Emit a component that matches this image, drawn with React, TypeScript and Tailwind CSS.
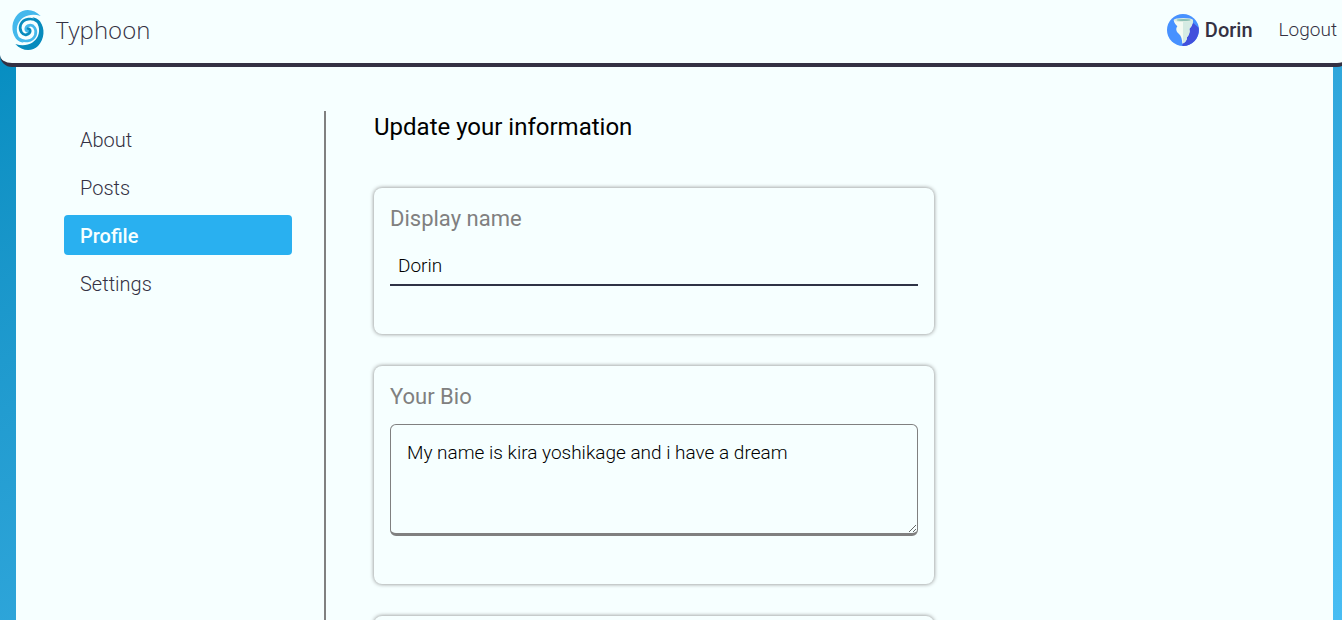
import React from "react";
import type { ReactNode } from "react";

function SwirlArm() {
  return (
    <>
      <path
        stroke="none"
        d="M98 30 C78 8 48 6 30 24 C10 44 8 76 24 98 C30 105 38 109 47 110 C28 94 22 72 30 54 C40 32 66 20 98 30Z"
      />
      <path
        fill="none"
        strokeWidth="8"
        strokeLinecap="round"
        d="M32 98 C46 109 74 108 82 88 C88 70 76 55 64 58 C51 61 50 75 60 76"
      />
    </>
  );
}

function Logo() {
  return (
    <svg viewBox="0 0 120 144" className="h-12 w-10" aria-hidden="true">
      <g fill="#44b8ec" stroke="#44b8ec">
        <SwirlArm />
      </g>
      <g fill="#078bbd" stroke="#078bbd" transform="rotate(180 60 72)">
        <SwirlArm />
      </g>
    </svg>
  );
}

function Avatar() {
  return (
    <svg viewBox="0 0 96 96" className="size-8" aria-hidden="true">
      <circle cx="48" cy="48" r="48" fill="#4791ff" />
      <path d="M78 26 L95 41 A48 48 0 0 1 46 96 L50 70Z" fill="#4150dc" />
      <path
        d="M20 18 C22 28 26 32 31 37 C25 44 28 54 36 60 C43 66 45 76 46 89 C54 86 60 80 60 70 C66 62 70 54 67 44 C76 36 77 28 78 18Z"
        fill="#f4faf2"
      />
      <path
        d="M48 18 H78 C77 28 76 36 67 44 C70 54 66 62 60 70 C60 80 54 86 48 88Z"
        fill="#d5ebe3"
      />
      <ellipse cx="49" cy="18" rx="29" ry="6" fill="#dcebe2" />
      <ellipse cx="50" cy="18" rx="21" ry="3" fill="#8cc0b4" />
    </svg>
  );
}

const links = ["About", "Posts", "Profile", "Settings"];

function Card({ children }: { children?: ReactNode }) {
  return (
    <section className="min-h-36 rounded-lg px-4 pt-4 pb-12 shadow-[0_0_4px_#808080]">
      {children}
    </section>
  );
}

export default function App() {
  return (
    <div className="h-screen overflow-hidden bg-linear-to-br from-[#008cbf] to-[#48bdf3] font-['Roboto','Open_Sans',sans-serif] font-light">
      <div className="-mr-[7px] flex min-h-full flex-col">
        <header className="flex items-center justify-between rounded-b-xl border-b-4 border-[#343143] bg-[#f6ffff] pt-1.5 pr-3 pb-[9px] pl-2 text-[#343143]">
          <a href="#home" className="flex items-center gap-2">
            <Logo />
            <span className="font-['Open_Sans',sans-serif] text-2xl">Typhoon</span>
          </a>
          <div className="flex items-center gap-[26px]">
            <a href="#profile" className="flex items-center gap-1.5 text-xl font-medium">
              <Avatar />
              Dorin
            </a>
            <button type="button" className="text-[19px]">
              Logout
            </button>
          </div>
        </header>
        <main className="mx-4 flex grow bg-[#f6ffff] pt-11 pl-12">
          <nav className="flex w-[262px] shrink-0 flex-col gap-2 border-r-2 border-[#808080] py-2 pr-8">
            {links.map((name) => (
              <a
                key={name}
                href={"#" + name.toLowerCase()}
                className={
                  name === "Profile"
                    ? "rounded bg-[#29b0f0] px-4 pt-[7px] pb-[5px] text-xl font-medium text-[#f6ffff]"
                    : "rounded px-4 pt-[7px] pb-[5px] text-xl text-[#343143]"
                }
              >
                {name}
              </a>
            ))}
          </nav>
          <form className="flex min-w-0 max-w-[608px] grow flex-col pl-12">
            <h1 className="mb-[45px] text-2xl font-normal text-black">
              Update your information
            </h1>
            <div className="flex flex-col gap-8">
              <Card>
                <label htmlFor="name" className="block text-[22px] leading-[30px] font-normal text-[#808080]">
                  Display name
                </label>
                <input
                  id="name"
                  defaultValue="Dorin"
                  className="mt-3.5 block h-[38px] w-full border-b-2 border-[#2f3346] bg-transparent px-2 pb-0.5 text-[19px] text-black outline-none"
                />
              </Card>
              <Card>
                <label htmlFor="bio" className="block text-[22px] leading-[30px] font-normal text-[#808080]">
                  Your Bio
                </label>
                <textarea
                  id="bio"
                  defaultValue="My name is kira yoshikage and i have a dream"
                  className="mt-3 block h-28 w-full resize rounded-md border border-b-3 border-[#808080] bg-transparent p-4 text-[19px] leading-6 text-black outline-none"
                />
              </Card>
              <Card />
            </div>
          </form>
        </main>
      </div>
    </div>
  );
}
